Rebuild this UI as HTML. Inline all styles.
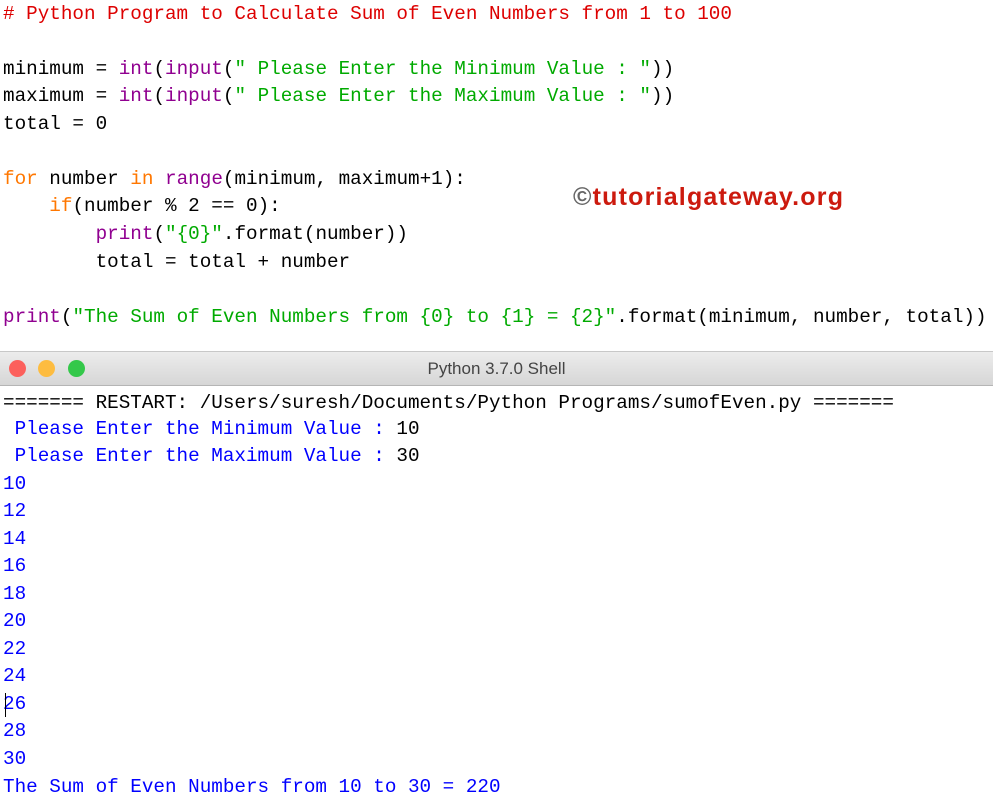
<!DOCTYPE html><html><head><style>
body{margin:0;width:993px;height:804px;background:#fff;overflow:hidden;position:relative;font-family:"Liberation Mono",monospace;}
.l{position:absolute;left:3px;font-size:19.3px;line-height:27.5px;white-space:pre;color:#000;height:27.5px}
.c{color:#dd0000}.k{color:#ff7700}.b{color:#900090}.s{color:#00aa00}.o{color:#0000ff}
.bar{position:absolute;left:0;top:351px;width:993px;height:33px;background:linear-gradient(#ececec,#d6d6d6);border-top:1px solid #c8c8c8;border-bottom:1px solid #b5b5b5}
.dot{position:absolute;top:8px;width:17px;height:17px;border-radius:50%}
.t{position:absolute;left:0;width:993px;top:0;line-height:33px;text-align:center;font-family:"Liberation Sans",sans-serif;font-size:17px;color:#444}
.logo{position:absolute;left:573px;top:183px;font-family:"Liberation Sans",sans-serif;font-weight:bold;font-size:25px;color:#cc1a0e;letter-spacing:1.2px}
</style></head><body>
<div class="l c" style="top:1px"># Python Program to Calculate Sum of Even Numbers from 1 to 100</div>
<div class="l" style="top:56px">minimum = <span class="b">int</span>(<span class="b">input</span>(<span class="s">" Please Enter the Minimum Value : "</span>))</div>
<div class="l" style="top:83px">maximum = <span class="b">int</span>(<span class="b">input</span>(<span class="s">" Please Enter the Maximum Value : "</span>))</div>
<div class="l" style="top:111px">total = 0</div>
<div class="l" style="top:166px"><span class="k">for</span> number <span class="k">in</span> <span class="b">range</span>(minimum, maximum+1):</div>
<div class="l" style="top:193px">    <span class="k">if</span>(number % 2 == 0):</div>
<div class="l" style="top:221px">        <span class="b">print</span>(<span class="s">"{0}"</span>.format(number))</div>
<div class="l" style="top:249px">        total = total + number</div>
<div class="l" style="top:304px"><span class="b">print</span>(<span class="s">"The Sum of Even Numbers from {0} to {1} = {2}"</span>.format(minimum, number, total))</div>
<div class="logo"><span style="color:#666">©</span>tutorialgateway.org</div>
<div class="bar">
<div class="dot" style="left:9px;background:#fc605c"></div>
<div class="dot" style="left:38px;background:#fdbc40"></div>
<div class="dot" style="left:68px;background:#34c84a"></div>
<div class="t">Python 3.7.0 Shell</div>
</div>
<div class="l" style="top:390px">======= RESTART: /Users/suresh/Documents/Python Programs/sumofEven.py =======</div>
<div class="l o" style="top:416px"> Please Enter the Minimum Value : <span style="color:#000">10</span></div>
<div class="l o" style="top:443px"> Please Enter the Maximum Value : <span style="color:#000">30</span></div>
<div class="l o" style="top:471px">10</div>
<div class="l o" style="top:498px">12</div>
<div class="l o" style="top:526px">14</div>
<div class="l o" style="top:553px">16</div>
<div class="l o" style="top:581px">18</div>
<div class="l o" style="top:608px">20</div>
<div class="l o" style="top:636px">22</div>
<div class="l o" style="top:663px">24</div>
<div class="l o" style="top:691px">26</div>
<div style="position:absolute;left:5px;top:693px;width:1px;height:24px;background:#000"></div>
<div class="l o" style="top:718px">28</div>
<div class="l o" style="top:746px">30</div>
<div class="l o" style="top:774px">The Sum of Even Numbers from 10 to 30 = 220</div>
</body></html>
